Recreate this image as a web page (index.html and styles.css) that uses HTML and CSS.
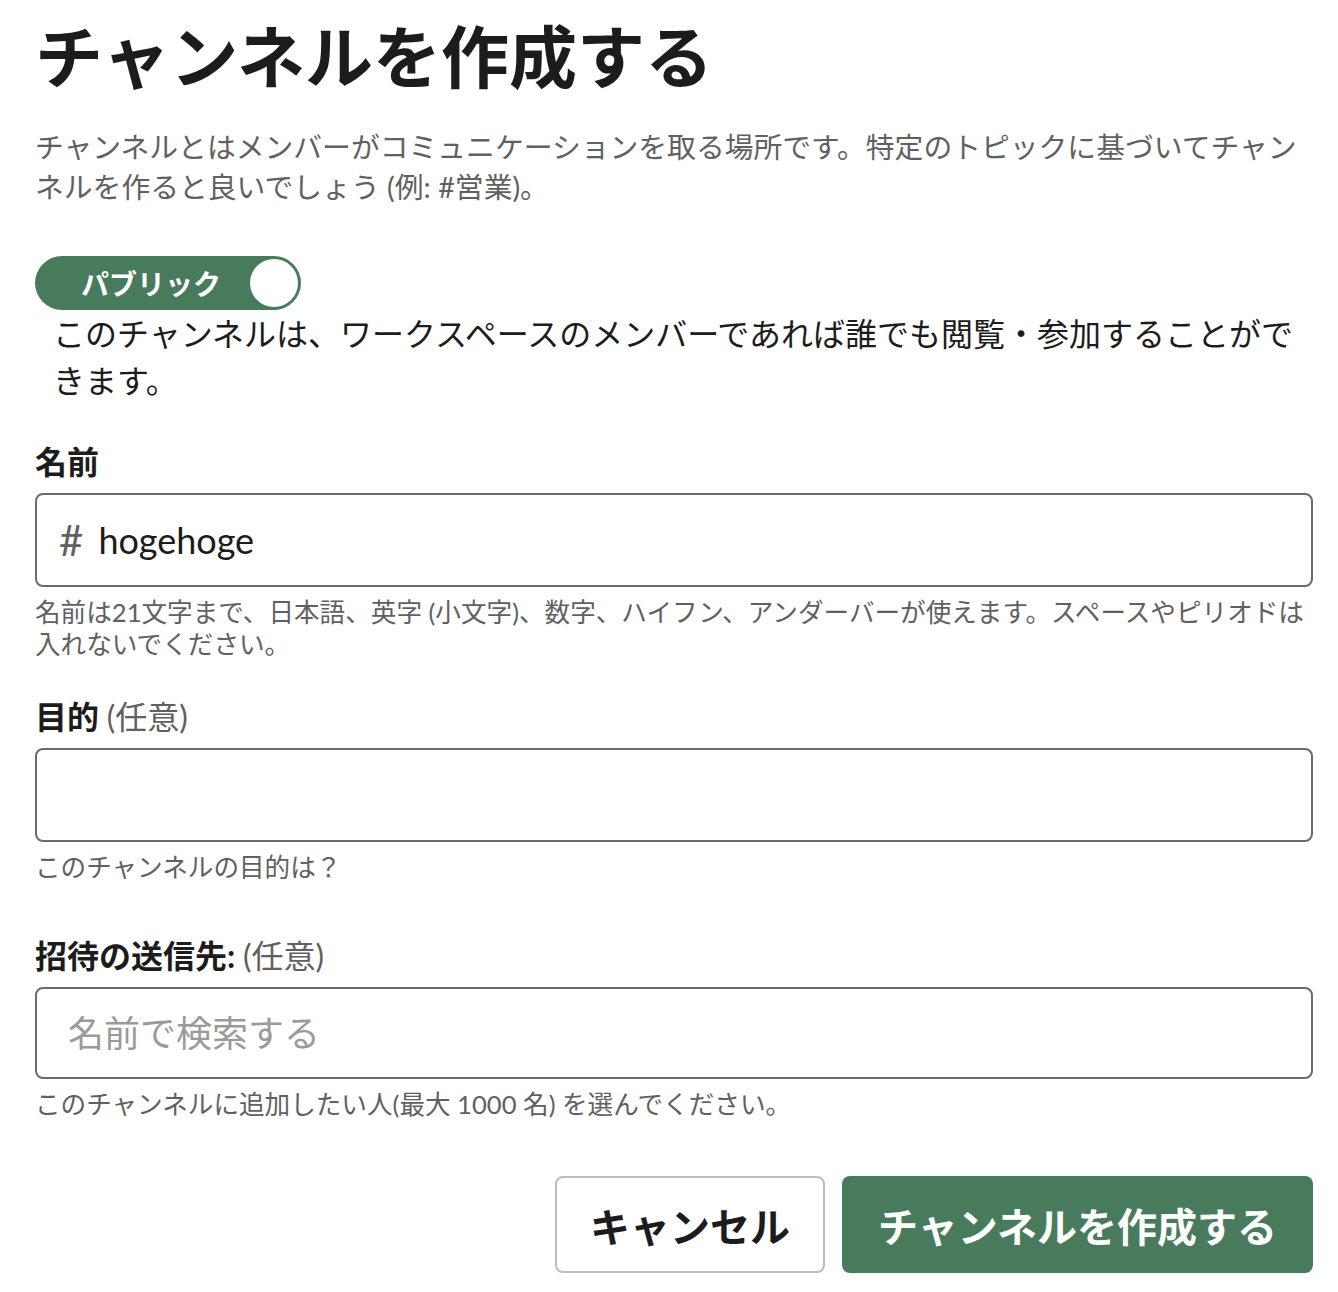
FILE: index.html
```html
<!DOCTYPE html>
<html lang="ja">
<head>
<meta charset="utf-8">
<title>チャンネルを作成する</title>
<link rel="stylesheet" href="styles.css">
</head>
<body>
<div class="page">
  <h1 class="title">チャンネルを作成する</h1>
  <p class="intro">チャンネルとはメンバーがコミュニケーションを取る場所です。特定のトピックに基づいてチャンネルを作ると良いでしょう (例: #営業)。</p>

  <div class="toggle">
    <span class="toggle-label">パブリック</span>
    <span class="toggle-knob"></span>
  </div>
  <p class="toggle-desc">このチャンネルは、ワークスペースのメンバーであれば誰でも閲覧・参加することができます。</p>

  <div class="field field-name">
    <label class="label">名前</label>
    <div class="input input-name">
      <span class="hash">#</span>
      <input class="control" type="text" value="hogehoge">
    </div>
    <p class="hint">名前は21文字まで、日本語、英字 (小文字)、数字、ハイフン、アンダーバーが使えます。スペースやピリオドは入れないでください。</p>
  </div>

  <div class="field field-purpose">
    <label class="label">目的 <span class="optional">(任意)</span></label>
    <div class="input">
      <input class="control" type="text" value="">
    </div>
    <p class="hint">このチャンネルの目的は？</p>
  </div>

  <div class="field field-invite">
    <label class="label">招待の送信先: <span class="optional">(任意)</span></label>
    <div class="input input-invite">
      <input class="control" type="text" placeholder="名前で検索する">
    </div>
    <p class="hint">このチャンネルに追加したい人(最大 1000 名) を選んでください。</p>
  </div>

  <div class="actions">
    <button class="btn btn-cancel" type="button">キャンセル</button>
    <button class="btn btn-create" type="button">チャンネルを作成する</button>
  </div>
</div>
</body>
</html>
```

FILE: styles.css
```css
* {
  box-sizing: border-box;
}

body {
  margin: 0;
  background: #ffffff;
  font-family: Lato, "Noto Sans CJK JP", sans-serif;
  color: #1d1c1d;
}

.page {
  width: 1338px;
  padding: 17px 25px 0 35px;
}

.title {
  margin: 0 0 30px 0;
  font-size: 68px;
  line-height: 80px;
  font-weight: 700;
  color: #1d1c1d;
  letter-spacing: 0;
}

.intro {
  margin: 0 0 49px 0;
  font-size: 28.8px;
  line-height: 40px;
  color: #616061;
}

.toggle {
  display: flex;
  align-items: center;
  width: 266px;
  height: 54px;
  padding: 3px;
  border-radius: 27px;
  background: #487b5c;
}

.toggle-label {
  margin-left: 43px;
  font-size: 28px;
  font-weight: 700;
  color: #ffffff;
  letter-spacing: 0;
}

.toggle-knob {
  margin-left: auto;
  width: 48px;
  height: 48px;
  border-radius: 50%;
  background: #ffffff;
}

.toggle-desc {
  margin: 0 0 38px 18px;
  font-size: 32px;
  line-height: 47px;
  color: #1d1c1d;
}

.field {
  display: flex;
  flex-direction: column;
}

.field-purpose {
  margin-top: 37px;
}

.field-invite {
  margin-top: 53px;
}

.label {
  display: block;
  font-size: 32px;
  line-height: 40px;
  font-weight: 700;
  color: #1d1c1d;
  margin-bottom: 11px;
}

.optional {
  font-weight: 400;
  color: #616061;
}

.input {
  display: flex;
  align-items: center;
  height: 94px;
  border: 2px solid #6b6b6b;
  border-radius: 8px;
  padding: 0 20px 0 31px;
  background: #fff;
}

.input-name {
  padding-left: 22px;
}

.input-invite {
  height: 92px;
}

.hash {
  font-size: 42px;
  line-height: 1;
  color: #616061;
  margin-right: 15px;
}

.control {
  flex: 1;
  border: none;
  outline: none;
  padding: 0;
  font-family: Lato, "Noto Sans CJK JP", sans-serif;
  font-size: 36px;
  color: #1d1c1d;
  background: transparent;
}

.control::placeholder {
  color: #9a9a9a;
}

.hint {
  margin: 9px 0 0 0;
  font-size: 25.6px;
  line-height: 32px;
  color: #616061;
}

.actions {
  display: flex;
  justify-content: flex-end;
  gap: 17px;
  margin-top: 56px;
}

.btn {
  height: 97px;
  border-radius: 8px;
  font-family: Lato, "Noto Sans CJK JP", sans-serif;
  font-size: 40px;
  font-weight: 700;
  cursor: pointer;
}

.btn-cancel {
  width: 270px;
  background: #ffffff;
  color: #1d1c1d;
  border: 2px solid #bdbdbd;
}

.btn-create {
  width: 471px;
  background: #487b5c;
  color: #ffffff;
  border: none;
}
```
